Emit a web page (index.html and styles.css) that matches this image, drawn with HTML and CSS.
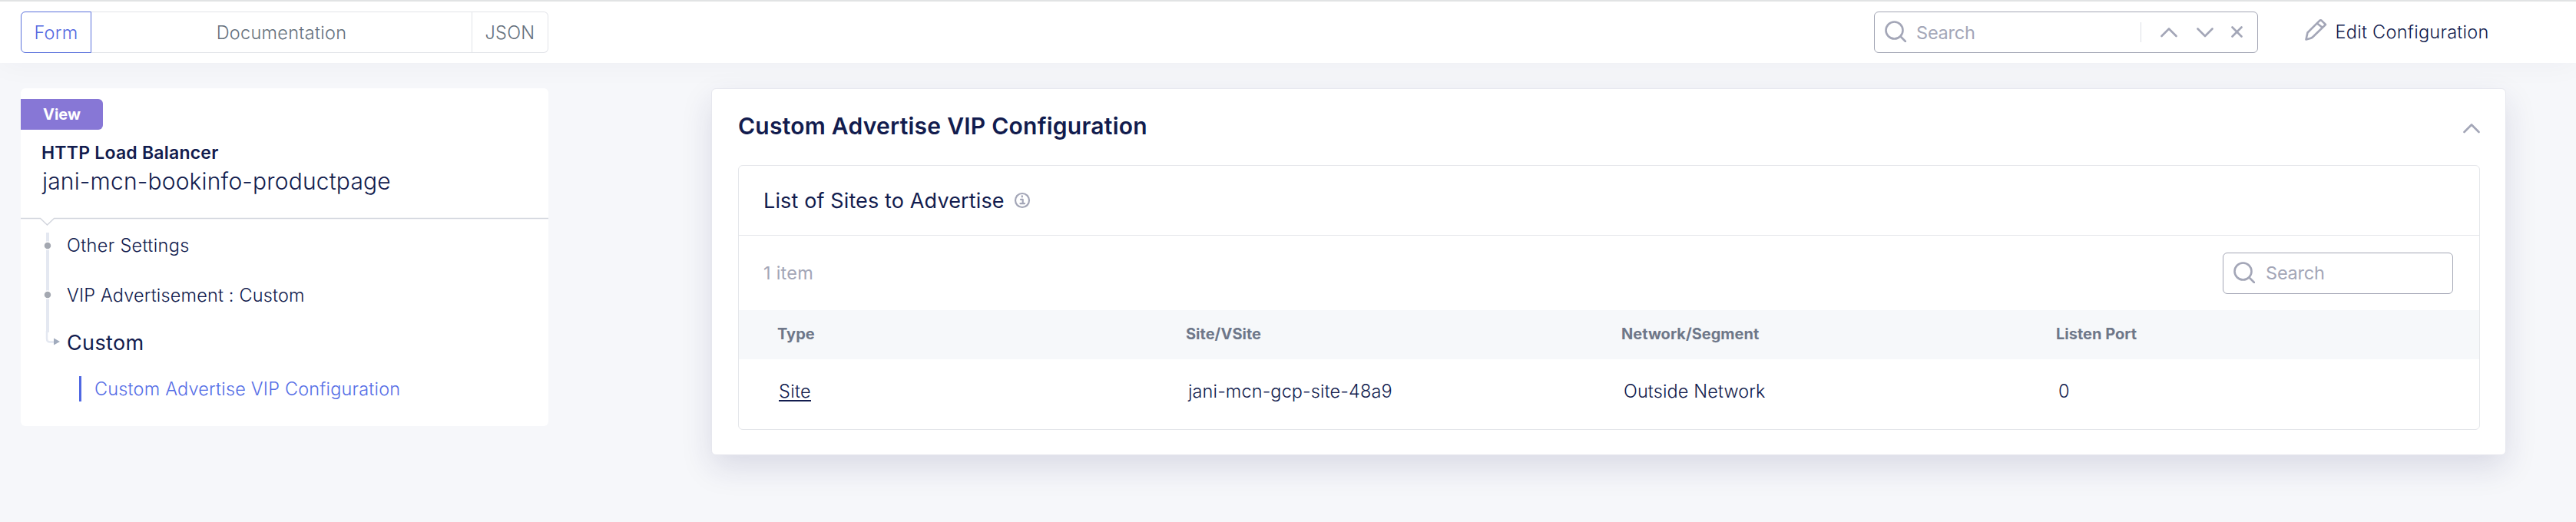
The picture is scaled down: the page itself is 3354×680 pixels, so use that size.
FILE: index.html
```html
<!DOCTYPE html>
<html lang="en">
<head>
<meta charset="utf-8">
<title>HTTP Load Balancer</title>
<link rel="stylesheet" href="styles.css">
</head>
<body>
<header class="topbar">
  <nav class="tabs">
    <a class="tab tab-form active">Form</a>
    <a class="tab tab-docs">Documentation</a>
    <a class="tab tab-json">JSON</a>
  </nav>
  <div class="search search-top">
    <svg class="icon search-icon" width="28" height="28" viewBox="0 0 28 28"><circle cx="12.5" cy="12.5" r="11"/><path d="M20.5 20.5l6.500 6.500"/></svg>
    <span class="placeholder">Search</span>
    <span class="divider"></span>
    <svg class="icon chev-up" width="22" height="13" viewBox="0 0 22 13"><path d="M1.500 11L11 1.500L20.500 11"/></svg>
    <svg class="icon chev-down" width="22" height="13" viewBox="0 0 22 13"><path d="M1.500 1.500L11 11L20.500 1.500"/></svg>
    <svg class="icon close" width="15" height="15" viewBox="0 0 15 15"><path d="M1.500 1.500l12 12M13.500 1.500l-12 12"/></svg>
  </div>
  <a class="edit">
    <svg class="icon pencil" width="30" height="30" viewBox="0 0 30 30"><path d="M2.500 27.500L4.500 18.500L19.700 3.300Q21.500 1.500 23.300 3.300L28 8L11.500 24Q10 25.500 8 26ZM17 6.500L24 12"/></svg>
    <span class="edit-text">Edit Configuration</span>
  </a>
</header>
<main class="content">
  <aside class="card">
    <span class="badge">View</span>
    <div class="kind">HTTP Load Balancer</div>
    <div class="name">jani-mcn-bookinfo-productpage</div>
    <svg class="notch" width="687" height="12" viewBox="0 0 687 12"><path d="M0 2.500H25.500L34.500 11L43.500 2.500H687"/></svg>
    <div class="tree">
      <svg class="rail" width="26" height="152" viewBox="0 0 26 152"><path class="rail-thick" d="M8 0V130"/><path class="rail-thin" d="M7 128V138Q7 142.500 11 142.500H18"/><circle cx="8" cy="17" r="5"/><circle cx="8" cy="81" r="5"/><path class="arrow" d="M16 137.500L24 142L16 146.500Z"/></svg>
      <ul class="steps">
        <li class="step">Other Settings</li>
        <li class="step">VIP Advertisement : Custom</li>
        <li class="step current">Custom</li>
        <li class="substep">Custom Advertise VIP Configuration</li>
      </ul>
    </div>
  </aside>
  <section class="panel">
    <div class="panel-head">
      <h1>Custom Advertise VIP Configuration</h1>
      <svg class="icon" width="22" height="13" viewBox="0 0 22 13"><path d="M1.500 11L11 1.500L20.500 11"/></svg>
    </div>
    <div class="box">
      <div class="box-head">
        <h2>List of Sites to Advertise</h2>
        <svg class="icon info" width="22" height="22" viewBox="0 0 22 22"><circle cx="11" cy="11" r="9"/><path d="M9 9.800H11.700V15M8.500 15.200H14M10.800 5.300V6.500"/></svg>
      </div>
      <div class="toolbar">
        <span class="count">1 item</span>
        <div class="search search-list">
          <svg class="icon search-icon" width="28" height="28" viewBox="0 0 28 28"><circle cx="12.500" cy="12.500" r="11"/><path d="M20.500 20.500l6.500 6.500"/></svg>
          <span class="placeholder">Search</span>
        </div>
      </div>
      <div class="row row-head"><span>Type</span><span>Site/VSite</span><span>Network/Segment</span><span>Listen Port</span></div>
      <div class="row row-body"><span><a class="link">Site</a></span><span>jani-mcn-gcp-site-48a9</span><span>Outside Network</span><span>0</span></div>
    </div>
  </section>
</main>
</body>
</html>
```
FILE: styles.css
```css
* { box-sizing: border-box; }
body {
  margin: 0;
  height: 680px;
  overflow: hidden;
  background: #f6f7fa;
  color: #121c4e;
  font-family: Inter, sans-serif;
  font-size: 23.5px;
  font-weight: 300;
  white-space: nowrap;
}
h1, h2, ul { margin: 0; padding: 0; list-style: none; }
svg { display: block; flex: none; }
.icon { fill: none; stroke: #a3a6b7; stroke-width: 2.6; stroke-linecap: round; stroke-linejoin: round; }
.topbar {
  display: flex;
  align-items: flex-start;
  height: 82px;
  padding: 13px 0 0 27px;
  border-top: 2px solid #e1e3e4;
  background: #fff;
  box-shadow: 0 0 40px rgba(30, 35, 80, .045);
}
.tabs { display: flex; width: 687px; height: 54px; }
.tab {
  display: flex;
  align-items: center;
  justify-content: center;
  border: 1px solid #e2e4e9;
  color: #66717d;
  letter-spacing: .28px;
}
.tab-form { width: 92px; border-radius: 6px 0 0 6px; }
.tab-form.active { border-color: #5b72dc; color: #5468e0; }
.tab-docs { width: 496px; border-left: 0; }
.tab-json { width: 99px; border-left: 0; border-radius: 0 6px 6px 0; }
.search {
  display: flex;
  align-items: center;
  height: 54px;
  border: 1px solid #a3a6b5;
  border-radius: 6px;
  background: #fff;
}
.placeholder { color: #a3a6b7; font-weight: 400; letter-spacing: -.2px; }
.search-icon { margin-bottom: 2px; }
.search-top { width: 500px; margin-left: 1726px; padding-left: 13px; }
.search-top .placeholder { width: 278px; padding-left: 13px; }
.divider { width: 1px; height: 26px; margin: 0 25px 0 27px; background: #dcdfe6; }
.chev-down { margin-left: 25px; }
.close { margin-left: 23px; margin-bottom: 1px; }
.edit { display: flex; align-items: center; height: 54px; margin-left: 60px; }
.pencil { margin-bottom: 6px; }
.edit-text { padding: 0 0 2px 10.5px; letter-spacing: .27px; }
.content { display: flex; align-items: flex-start; padding: 33px 0 0 27px; }
.card { width: 687px; height: 440px; padding-top: 14px; border-radius: 6px; background: #fff; }
.badge {
  display: flex;
  align-items: center;
  justify-content: center;
  width: 107px;
  height: 40px;
  border-radius: 0 6px 6px 0;
  background: #8777d6;
  color: #fff;
  font-size: 20px;
  font-weight: 700;
}
.kind { height: 30px; margin-top: 15px; padding-left: 27px; font-size: 23px; font-weight: 600; letter-spacing: .22px; line-height: 30px; }
.name { height: 44px; padding-left: 28px; font-size: 30px; letter-spacing: .17px; line-height: 44px; }
.notch { margin-top: 24px; fill: none; stroke: #d3d6de; stroke-width: 1.5; }
.tree { display: flex; padding: 9px 0 0 27px; }
.rail { fill: #a4a8b1; }
.rail circle { stroke: #fff; stroke-width: 1.5; }
.rail-thick { fill: none; stroke: #e4e8f1; stroke-width: 4; }
.rail-thin { fill: none; stroke: #e4e8f1; stroke-width: 2.5; }
.arrow { fill: #a1abbd; }
.steps { padding-left: 7px; }
.step { height: 40px; line-height: 40px; letter-spacing: .15px; }
.step:first-child { margin-top: -3px; letter-spacing: .34px; }
.step + .step { margin-top: 25px; }
.step.current { margin-top: 22px; font-size: 27px; font-weight: 400; letter-spacing: .35px; }
.substep {
  height: 33px;
  margin: 23px 0 0 16px;
  padding-left: 17px;
  border-left: 3px solid #5068e2;
  color: #566ee6;
  letter-spacing: .18px;
  line-height: 33px;
}
.panel {
  width: 2337px;
  height: 478px;
  margin-left: 212px;
  padding: 0 33px 0 34px;
  border: 1px solid #e6e7ee;
  border-radius: 6px;
  background: #fff;
  box-shadow: 0 16px 40px rgba(30, 32, 90, .13);
}
.panel-head { display: flex; align-items: center; justify-content: space-between; height: 99px; }
.panel-head h1 { padding-bottom: 3px; font-size: 30px; font-weight: 600; letter-spacing: .25px; line-height: 40px; }
.panel-head .icon { margin-top: 4px; }
.box { height: 345px; border: 1px solid #e4e6ea; border-radius: 6px; }
.box-head { display: flex; align-items: center; height: 91px; padding-left: 32px; border-bottom: 1px solid #e4e6ea; }
.box-head h2 { font-size: 27px; font-weight: 400; letter-spacing: .13px; }
.info { margin: 0 0 1px 12px; stroke-width: 2.2; }
.toolbar { display: flex; align-items: center; justify-content: space-between; height: 97px; padding: 0 34px 0 32px; }
.count { padding-bottom: 1px; color: #a3a6b7; font-weight: 400; letter-spacing: .25px; }
.search-list { width: 300px; padding-left: 13px; }
.search-list .placeholder { padding-left: 14px; }
.row { display: grid; align-items: center; }
.row-head {
  grid-template-columns: 532px 567px 566px 1fr;
  height: 64px;
  padding: 0 0 2px 50px;
  background: #f6f8fa;
  color: #6e7789;
  font-size: 20px;
  font-weight: 700;
}
.row-body { grid-template-columns: 533px 567px 566px 1fr; height: 82px; padding-left: 52px; letter-spacing: .1px; }
.link { text-decoration: underline; text-decoration-thickness: 2px; text-underline-offset: 3px; letter-spacing: .3px; }
```
